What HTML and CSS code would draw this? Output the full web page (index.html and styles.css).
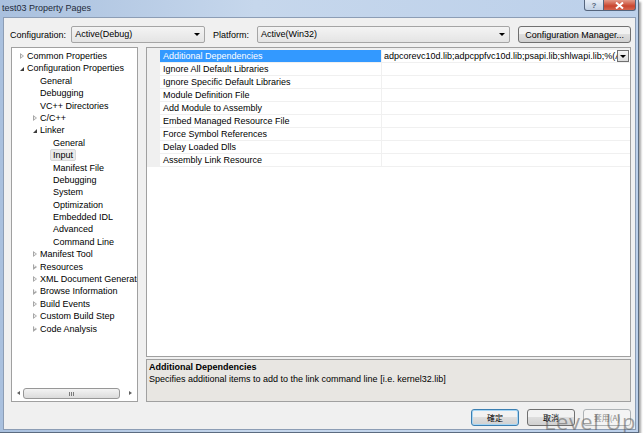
FILE: index.html
```html
<!DOCTYPE html>
<html lang="en">
<head>
    <meta charset="UTF-8">
    <title>test03 Property Pages</title>
    <link rel="stylesheet" href="styles.css">
</head>
<body>
    <div class="window">
        <div class="titlebar">
            <span class="title">test03 Property Pages</span>
            <div class="caption-buttons">
                <div class="cap-help">?</div>
                <div class="cap-close">
                    <svg width="9" height="7" viewBox="0 0 9 7"><path d="M1 0.5 L8 6.5 M8 0.5 L1 6.5" stroke="#ffffff" stroke-width="2"/></svg>
                </div>
            </div>
        </div>

        <div class="dialog">
            <div class="toolbar">
                <span class="label">Configuration:</span>
                <div class="combo combo-config">Active(Debug)<span class="arrow"></span></div>
                <span class="label label-platform">Platform:</span>
                <div class="combo combo-platform">Active(Win32)<span class="arrow"></span></div>
                <button class="btn btn-manager">Configuration Manager...</button>
            </div>

            <div class="main">
                <div class="tree">
                    <ul class="tree-list">
                        <li class="lvl1"><span class="tw closed"></span>Common Properties</li>
                        <li class="lvl1"><span class="tw open"></span>Configuration Properties</li>
                        <li class="lvl2"><span class="tw"></span>General</li>
                        <li class="lvl2"><span class="tw"></span>Debugging</li>
                        <li class="lvl2"><span class="tw"></span>VC++ Directories</li>
                        <li class="lvl2"><span class="tw closed"></span>C/C++</li>
                        <li class="lvl2"><span class="tw open"></span>Linker</li>
                        <li class="lvl3"><span class="tw"></span>General</li>
                        <li class="lvl3 current"><span class="tw"></span><span class="sel">Input</span></li>
                        <li class="lvl3"><span class="tw"></span>Manifest File</li>
                        <li class="lvl3"><span class="tw"></span>Debugging</li>
                        <li class="lvl3"><span class="tw"></span>System</li>
                        <li class="lvl3"><span class="tw"></span>Optimization</li>
                        <li class="lvl3"><span class="tw"></span>Embedded IDL</li>
                        <li class="lvl3"><span class="tw"></span>Advanced</li>
                        <li class="lvl3"><span class="tw"></span>Command Line</li>
                        <li class="lvl2"><span class="tw closed"></span>Manifest Tool</li>
                        <li class="lvl2"><span class="tw closed"></span>Resources</li>
                        <li class="lvl2"><span class="tw closed"></span>XML Document Generator</li>
                        <li class="lvl2"><span class="tw closed"></span>Browse Information</li>
                        <li class="lvl2"><span class="tw closed"></span>Build Events</li>
                        <li class="lvl2"><span class="tw closed"></span>Custom Build Step</li>
                        <li class="lvl2"><span class="tw closed"></span>Code Analysis</li>
                    </ul>
                    <div class="hscroll">
                        <span class="sb-arrow sb-left"></span>
                        <div class="sb-track"><div class="sb-thumb"><span class="grip"></span></div></div>
                        <span class="sb-arrow sb-right"></span>
                    </div>
                </div>

                <div class="props">
                    <div class="grid">
                        <div class="row selected">
                            <div class="name">Additional Dependencies</div>
                            <div class="value">
                                <span class="value-text">adpcorevc10d.lib;adpcppfvc10d.lib;psapi.lib;shlwapi.lib;%(AdditionalDependencies)</span>
                                <span class="drop"><span class="arrow"></span></span>
                            </div>
                        </div>
                        <div class="row"><div class="name">Ignore All Default Libraries</div><div class="value"></div></div>
                        <div class="row"><div class="name">Ignore Specific Default Libraries</div><div class="value"></div></div>
                        <div class="row"><div class="name">Module Definition File</div><div class="value"></div></div>
                        <div class="row"><div class="name">Add Module to Assembly</div><div class="value"></div></div>
                        <div class="row"><div class="name">Embed Managed Resource File</div><div class="value"></div></div>
                        <div class="row"><div class="name">Force Symbol References</div><div class="value"></div></div>
                        <div class="row"><div class="name">Delay Loaded Dlls</div><div class="value"></div></div>
                        <div class="row"><div class="name">Assembly Link Resource</div><div class="value"></div></div>
                        <div class="grid-fill"></div>
                    </div>
                    <div class="desc">
                        <div class="desc-title">Additional Dependencies</div>
                        <div class="desc-text">Specifies additional items to add to the link command line [i.e. kernel32.lib]</div>
                    </div>
                </div>
            </div>

            <div class="buttons">
                <button class="btn btn-dlg btn-default">確定</button>
                <button class="btn btn-dlg">取消</button>
                <button class="btn btn-dlg btn-disabled">套用(A)</button>
            </div>
        </div>
        <div class="watermark">Level Up</div>
    </div>
</body>
</html>
```

FILE: styles.css
```css
body {
    margin: 0;
    background: #ffffff;
    font-family: "Liberation Sans", Arial, sans-serif;
    font-size: 9px;
    color: #000;
}

.window {
    position: relative;
    width: 638px;
    height: 432px;
    display: flex;
    flex-direction: column;
    background: linear-gradient(90deg, #a9c0de, #c6d7ec 40%, #bcd0ea);
    border-right: 1px solid #5b6b80;
    border-bottom: 1px solid #5b6b80;
    box-shadow: 2px 2px 2px rgba(0,0,0,0.35);
}

.titlebar {
    position: relative;
    height: 17px;
    padding-left: 2px;
}

.title {
    display: block;
    padding-top: 3px;
    font-size: 9px;
    color: #1e2a3a;
}

/* window chrome: caption buttons sit over the title bar */
.caption-buttons {
    position: absolute;
    top: 0;
    right: 2px;
    display: flex;
    z-index: 2;
}

.cap-help, .cap-close {
    height: 11px;
    display: flex;
    align-items: center;
    justify-content: center;
    font-size: 8px;
    font-weight: bold;
    border: 1px solid #55657d;
    border-top: 0;
    box-sizing: border-box;
}

.cap-help {
    width: 20px;
    background: linear-gradient(#e6edf6, #c2d1e4);
    color: #55657d;
    border-radius: 0 0 0 3px;
}

.cap-close {
    width: 32px;
    background: linear-gradient(#e49a88, #c9462f 60%, #d46650);
    border-left: 0;
    border-radius: 0 0 3px 0;
}

.dialog {
    flex: 1;
    margin: 0 2px 2px 3px;
    border: 1px solid #8c9db5;
    background: #f0f0f0;
    display: flex;
    flex-direction: column;
    padding: 8px 4px 0 6px;
}

.toolbar {
    display: flex;
    align-items: center;
    height: 17px;
}

.label {
    width: 62px;
}

.label-platform {
    width: auto;
    margin: 0 8px 0 8px;
}

.combo {
    position: relative;
    height: 15px;
    line-height: 15px;
    border: 1px solid #a5a5a5;
    border-radius: 2px;
    background: linear-gradient(#f4f4f4, #e4e4e4);
    padding-left: 3px;
    box-sizing: content-box;
}

.combo-config {
    width: 130px;
}

.combo-platform {
    width: 251px;
}

.arrow {
    position: absolute;
    right: 4px;
    top: 6px;
    width: 0;
    height: 0;
    border-left: 3px solid transparent;
    border-right: 3px solid transparent;
    border-top: 3px solid #000;
}

.btn {
    font-family: "Liberation Sans", Arial, sans-serif;
    font-size: 9px;
    color: #000;
    border: 1px solid #707070;
    border-radius: 3px;
    background: linear-gradient(#f2f2f2 50%, #dedede 50%, #d0d0d0);
    padding: 0;
}

.btn-manager {
    margin-left: 8px;
    width: 114px;
    height: 17px;
}

.main {
    display: flex;
    margin-top: 4px;
    height: 355px;
}

.tree {
    width: 125px;
    margin-left: 1px;
    border: 1px solid #a0a0a0;
    background: #fff;
    display: flex;
    flex-direction: column;
    overflow: hidden;
}

.tree-list {
    list-style: none;
    margin: 2px 0 0 0;
    padding: 0;
    flex: 1;
}

.tree-list li {
    height: 12.4px;
    line-height: 12.4px;
    white-space: nowrap;
    display: flex;
    align-items: center;
}

.tw {
    display: inline-block;
    width: 9px;
    height: 6px;
    position: relative;
    flex: none;
}

.tw.closed::before {
    content: "";
    position: absolute;
    left: 2px;
    top: 0;
    border-top: 3px solid transparent;
    border-bottom: 3px solid transparent;
    border-left: 4px solid #a6a6a6;
}

.tw.closed::after {
    content: "";
    position: absolute;
    left: 3px;
    top: 1.5px;
    border-top: 1.5px solid transparent;
    border-bottom: 1.5px solid transparent;
    border-left: 2px solid #fff;
}

.tw.open::before {
    content: "";
    position: absolute;
    left: 2px;
    top: 1px;
    border-left: 4px solid transparent;
    border-bottom: 4px solid #3c3c3c;
}

.lvl1 { padding-left: 6px; }
.lvl2 { padding-left: 19px; }
.lvl3 { padding-left: 32px; }

.sel {
    background: #eaeaea;
    border: 1px solid #d9d9d9;
    border-radius: 2px;
    padding: 0 2px;
    margin-left: -3px;
    line-height: 10px;
}

.hscroll {
    height: 11px;
    margin: 0 3px 2px 3px;
    display: flex;
    align-items: center;
}

.sb-arrow {
    width: 8px;
    height: 11px;
    position: relative;
}

.sb-left::before, .sb-right::before {
    content: "";
    position: absolute;
    top: 3px;
    border-top: 2.5px solid transparent;
    border-bottom: 2.5px solid transparent;
}

.sb-left::before {
    left: 2px;
    border-right: 3px solid #606060;
}

.sb-right::before {
    right: 2px;
    border-left: 3px solid #606060;
}

.sb-track {
    flex: 1;
    padding: 0 6px 0 0;
}

.sb-thumb {
    height: 9px;
    border: 1px solid #979797;
    border-radius: 3px;
    background: linear-gradient(#f3f3f3, #dcdcdc);
    display: flex;
    align-items: center;
    justify-content: center;
}

.grip {
    width: 6px;
    height: 4px;
    background: repeating-linear-gradient(90deg, #7a7a7a 0 1px, transparent 1px 2px);
}

.props {
    flex: 1;
    margin-left: 8px;
    display: flex;
    flex-direction: column;
}

.grid {
    height: 310px;
    border: 1px solid #a0a0a0;
    display: flex;
    flex-direction: column;
    padding-top: 2px;
    background: linear-gradient(#f0f0f0, #f0f0f0) top / 100% 2px no-repeat, #fff;
}

.row {
    display: flex;
    height: 13px;
    background: linear-gradient(90deg, #f0f0f0 13px, transparent 13px);
}

.name {
    margin-left: 13px;
    width: 218px;
    line-height: 12px;
    padding-left: 3px;
    border-bottom: 1px solid #f0f0f0;
    border-right: 1px solid #f0f0f0;
    white-space: nowrap;
    overflow: hidden;
}

.value {
    flex: 1;
    position: relative;
    border-bottom: 1px solid #f0f0f0;
    line-height: 12px;
    padding-left: 2px;
    overflow: hidden;
    white-space: nowrap;
}

.selected .name {
    background: #3399ff;
    color: #fff;
}

.value-text {
    display: block;
    width: 236px;
    overflow: hidden;
}

.drop {
    position: absolute;
    right: 1px;
    top: 0;
    width: 10px;
    height: 10px;
    border: 1px solid #707070;
    background: linear-gradient(#f6f6f6, #dcdcdc);
}

.drop .arrow {
    right: 2px;
    top: 4px;
}

.grid-fill {
    flex: 1;
    background: #fff;
}

.desc {
    margin-top: 2px;
    height: 40px;
    border: 1px solid #a0a0a0;
    background: #e8e6e2;
    padding: 1px 2px;
    line-height: 12.5px;
}

.desc-title {
    font-weight: bold;
}

.buttons {
    display: flex;
    justify-content: flex-end;
    gap: 8px;
    margin-top: 7px;
}

.btn-dlg {
    width: 48px;
    height: 17px;
    font-family: "Noto Sans CJK TC", "Liberation Sans", sans-serif;
    font-size: 8px;
}

.btn-default {
    border-color: #3c7fb1;
    box-shadow: inset 0 0 0 1px #a6d6f5;
}

.btn-disabled {
    border-color: #adb2b5;
    color: #8d8d8d;
    background: #f4f4f4;
}

.watermark {
    position: absolute;
    right: 2px;
    bottom: -4px;
    font-family: "Open Sans", sans-serif;
    font-size: 22px;
    letter-spacing: 0.5px;
    color: rgba(90, 90, 90, 0.55);
}
```
